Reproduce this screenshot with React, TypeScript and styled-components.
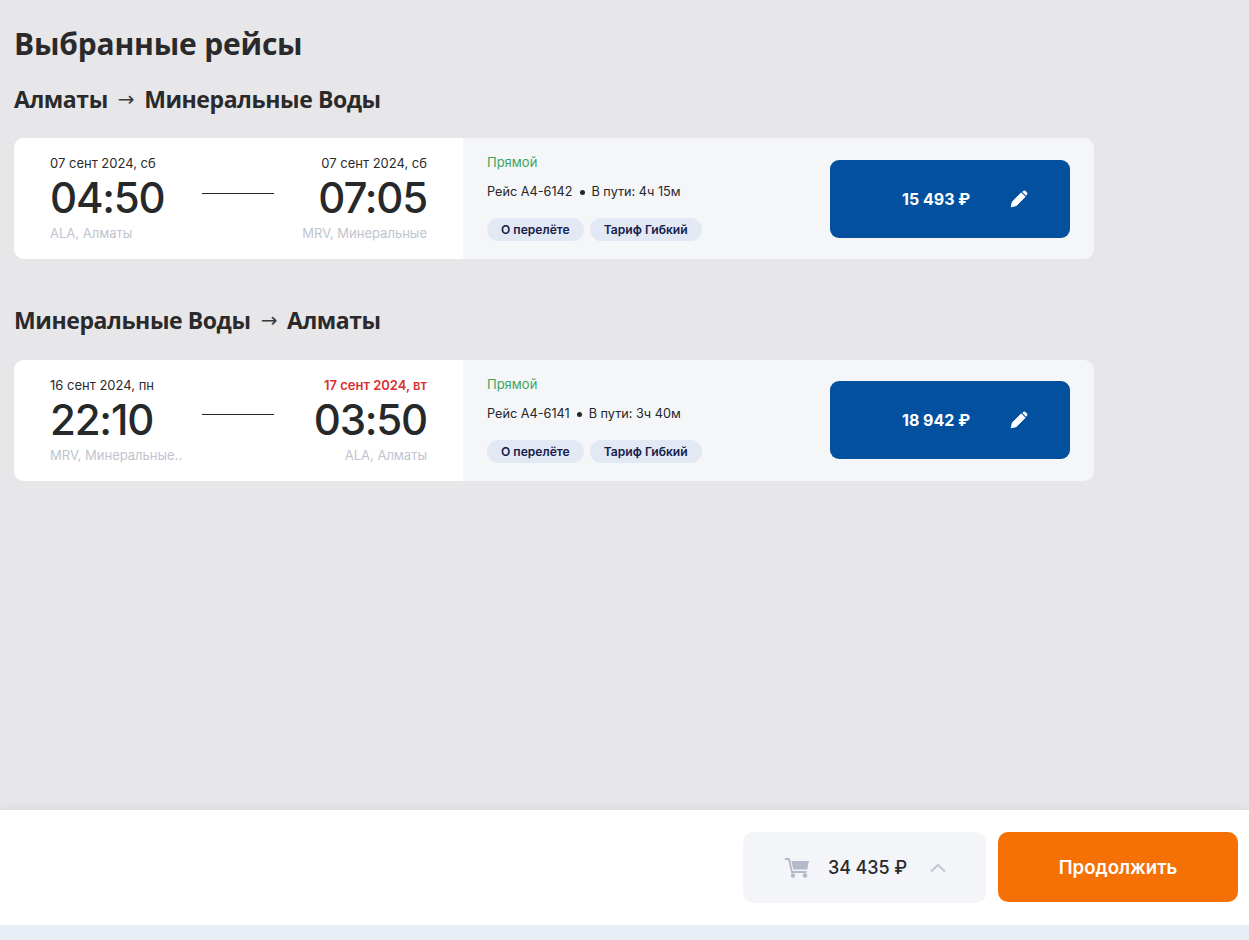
import React from "react";
import styled, { createGlobalStyle } from "styled-components";

const Global = createGlobalStyle`
  html, body { margin: 0; padding: 0; }
  body { font-family: "Inter", "Liberation Sans", sans-serif; background: #e7e7e9; }
  * { box-sizing: border-box; }
`;
const Page = styled.div`
  height: 100vh; display: flex; flex-direction: column; background: #e7e7e9; overflow: hidden;
`;
const Main = styled.main`
  flex: 1; padding: 26px 14px 0 14px;
`;
const Title = styled.h1`
  margin: 0; font: 700 30px/36px "Open Sans", sans-serif; color: #2a2a2c; letter-spacing: -0.2px;
`;
const Route = styled.h2`
  margin: 0 0 24px; font: 700 23px/30px "Open Sans", sans-serif; color: #2a2a2c; display: flex; gap: 10px; align-items: center;
  letter-spacing: -0.42px;
`;
const Section = styled.section`
  margin-top: 22px;
  &:last-child { margin-top: 46px; }
  &:last-child ${Route} { margin-bottom: 25px; }
`;
const Arrow = styled.span`
  font: 400 20px/30px "DejaVu Sans", sans-serif; color: #3a3a3c;
`;
const Card = styled.article`
  width: 1080px; height: 121px; border-radius: 10px; background: #f4f6f8; display: flex; overflow: hidden;
`;
const Times = styled.div`
  width: 449px; background: #fff; padding: 16px 36px 0; display: grid; grid-template-columns: 152px 72px 1fr; align-items: start;
`;
const Side = styled.div<{ $right?: boolean }>`
  display: flex; flex-direction: column; align-items: ${p => (p.$right ? "flex-end" : "flex-start")};
`;
const DateText = styled.div<{ $warn?: boolean }>`
  font-size: 13px; line-height: 18px; color: ${p => (p.$warn ? "#d8302f" : "#2a2a2c")}; font-weight: ${p => (p.$warn ? 600 : 400)};
  white-space: nowrap;
`;
const Time = styled.div`
  font-size: 42px; line-height: 50px; font-weight: 500; color: #27282a; white-space: nowrap; margin-top: 1px; letter-spacing: -1.2px;
`;
const Place = styled.div`
  font-size: 13px; line-height: 18px; color: #bfc4cf; white-space: nowrap; margin-top: 1px;
`;
const Line = styled.div<{ $lift?: boolean }>`
  height: 1px; background: #27282a; margin-top: ${p => (p.$lift ? 38 : 39)}px;
`;
const Info = styled.div`
  flex: 1; padding: 15px 24px 0; display: flex; justify-content: space-between; align-items: flex-start;
`;
const Details = styled.div`
  display: flex; flex-direction: column;
`;
const Direct = styled.div`
  font-size: 13px; line-height: 18px; font-weight: 400; color: #3fa45f;
`;
const Flight = styled.div`
  font-size: 12.7px; line-height: 18px; color: #25262a; margin-top: 12px; display: flex; gap: 7px; align-items: center;
`;
const Dot = styled.span`
  width: 5px; height: 5px; border-radius: 50%; background: #25262a;
`;
const Tags = styled.div`
  display: flex; gap: 6px; margin-top: 17px;
`;
const Tag = styled.span`
  height: 23px; padding: 0 14px; border-radius: 12px; background: #e3e8f5; color: #14204a;
  font-size: 12.1px; font-weight: 600; line-height: 23px; white-space: nowrap;
`;
const PriceButton = styled.button<{ $lift?: boolean }>`
  width: 240px; height: 78px; margin-top: ${p => (p.$lift ? 6 : 7)}px; border: 0; border-radius: 9px; background: #03509f; color: #fff;
  display: flex; align-items: center; padding: 0 41px 0 72px; justify-content: space-between;
  font: 700 16px/20px "Inter", sans-serif;
`;
const Footer = styled.footer`
  height: 115px; background: #fff; box-shadow: 0 -3px 8px rgba(0,0,0,.05); display: flex; justify-content: flex-end; gap: 12px;
  padding: 22px 11px 0 0;
`;
const Total = styled.div`
  width: 243px; height: 71px; border-radius: 10px; background: #f4f5f8; display: flex; align-items: center; padding-left: 42px;
  font-size: 18px; font-weight: 500; color: #2a2a2c; letter-spacing: -0.1px;
`;
const TotalValue = styled.span`
  margin-left: 19px; margin-right: 23px; white-space: nowrap;
`;
const Continue = styled.button`
  width: 240px; height: 70px; border: 0; border-radius: 10px; background: #f57005; color: #fff;
  font: 600 18.6px/24px "Inter", sans-serif;
`;
const Strip = styled.div`
  height: 15px; background: #e6edf4;
`;

const Pencil = () => (
  <svg width="20" height="20" viewBox="0 0 24 24" fill="#fff" aria-hidden>
    <path d="M2.6 21.4 4 15.2 14.6 4.6 19.4 9.4 8.8 20z" stroke="#fff" strokeWidth="1" strokeLinejoin="round" />
    <path d="M16 3.5 17 2.5a2 2 0 0 1 2.8 0l1.7 1.7a2 2 0 0 1 0 2.8l-1 1z" />
  </svg>
);
const Cart = () => (
  <svg width="24" height="20" viewBox="0 0 24 20" fill="#b4bac9" aria-hidden>
    <path d="M0 0h4.2l.9 1.3L7.6 13h14v2H6.2L3.2 2H0z" />
    <path d="M6.4 3H24l-1.8 8.6H8.3z" />
    <circle cx="8" cy="17.5" r="2.2" />
    <circle cx="20" cy="17.5" r="2.2" />
  </svg>
);
const Chevron = () => (
  <svg width="16" height="10" viewBox="0 0 16 10" fill="none" stroke="#c3c8d3" strokeWidth="2.2" aria-hidden>
    <path d="M1 8.5 8 2l7 6.5" />
  </svg>
);

type F = { from: string; to: string; d1: string; d2: string; warn?: boolean; t1: string; t2: string; p1: string; p2: string; no: string; dur: string; price: string; lift?: boolean };
const flights: F[] = [
  { from: "Алматы", to: "Минеральные Воды", d1: "07 сент 2024, сб", d2: "07 сент 2024, сб", t1: "04:50", t2: "07:05", p1: "ALA, Алматы", p2: "MRV, Минеральные", no: "Рейс А4-6142", dur: "В пути: 4ч 15м", price: "15 493 ₽" },
  { from: "Минеральные Воды", to: "Алматы", d1: "16 сент 2024, пн", d2: "17 сент 2024, вт", warn: true, t1: "22:10", t2: "03:50", p1: "MRV, Минеральные..", p2: "ALA, Алматы", no: "Рейс А4-6141", dur: "В пути: 3ч 40м", price: "18 942 ₽", lift: true },
];

export default function App() {
  return (
    <Page>
      <Global />
      <Main>
        <Title>Выбранные рейсы</Title>
        {flights.map(f => (
          <Section key={f.no}>
            <Route>{f.from}<Arrow>→</Arrow>{f.to}</Route>
            <Card>
              <Times>
                <Side>
                  <DateText>{f.d1}</DateText>
                  <Time>{f.t1}</Time>
                  <Place>{f.p1}</Place>
                </Side>
                <Line $lift={f.lift} />
                <Side $right>
                  <DateText $warn={f.warn}>{f.d2}</DateText>
                  <Time>{f.t2}</Time>
                  <Place>{f.p2}</Place>
                </Side>
              </Times>
              <Info>
                <Details>
                  <Direct>Прямой</Direct>
                  <Flight>{f.no}<Dot />{f.dur}</Flight>
                  <Tags><Tag>О перелёте</Tag><Tag>Тариф Гибкий</Tag></Tags>
                </Details>
                <PriceButton $lift={f.lift}>{f.price}<Pencil /></PriceButton>
              </Info>
            </Card>
          </Section>
        ))}
      </Main>
      <Footer>
        <Total><Cart /><TotalValue>34 435 ₽</TotalValue><Chevron /></Total>
        <Continue>Продолжить</Continue>
      </Footer>
      <Strip />
    </Page>
  );
}
